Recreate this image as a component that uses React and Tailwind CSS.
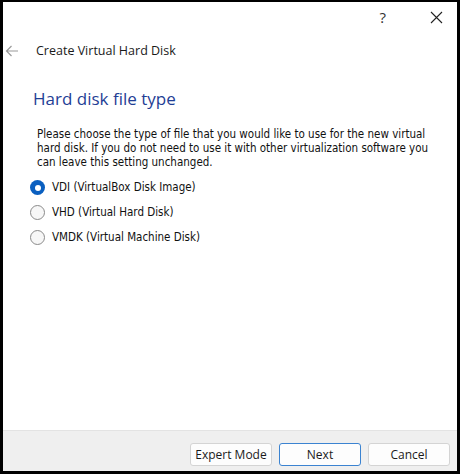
import React from "react";

const ui = { fontFamily: '"Open Sans", "Noto Sans", sans-serif' };
const body = { fontFamily: '"DejaVu Sans Condensed", "DejaVu Sans", Verdana, sans-serif' };

function Radio({ checked }) {
  return checked ? (
    <span className="flex h-[15px] w-[15px] items-center justify-center rounded-full bg-[#0a5fc0]">
      <span className="h-[6px] w-[6px] rounded-full bg-white" />
    </span>
  ) : (
    <span className="h-[15px] w-[15px] rounded-full border border-[#8a8a8a] bg-[#f7f7f7]" />
  );
}

function Btn({ children, primary }) {
  return (
    <button
      className={
        primary
          ? "h-[23px] w-[82px] rounded-[3px] border border-[#3b83d1] bg-[#fdfdfd] text-[12px] text-[#1a1a1a]"
          : "h-[23px] w-[82px] rounded-[3px] border border-[#d4d4d4] bg-[#fdfdfd] text-[12px] text-[#1a1a1a]"
      }
      style={ui}
    >
      {children}
    </button>
  );
}

export default function App() {
  const options = [
    "VDI (VirtualBox Disk Image)",
    "VHD (Virtual Hard Disk)",
    "VMDK (Virtual Machine Disk)",
  ];
  return (
    <div className="h-[474px] w-[460px] bg-black pb-[3px] pl-[3px] pr-[3px] pt-[2px]">
      <div className="flex h-full flex-col bg-white">
        {/* title bar */}
        <div className="flex h-[30px] items-center justify-end">
          <span className="mr-[44px] text-[15px] text-[#333]" style={ui}>?</span>
          <svg width="13" height="13" viewBox="0 0 13 13" className="mr-[14px]">
            <path d="M1 1L12 12M12 1L1 12" stroke="#222" strokeWidth="1.1" />
          </svg>
        </div>
        {/* header */}
        <div className="flex h-[38px] items-center">
          <svg width="14" height="12" viewBox="0 0 14 12" className="ml-[2px]">
            <path d="M13 6H1.5M6.5 1L1.5 6l5 5" stroke="#9a9a9a" strokeWidth="1.2" fill="none" />
          </svg>
          <span className="ml-[17px] text-[12.5px] text-[#1a1a1a]" style={ui}>Create Virtual Hard Disk</span>
        </div>
        {/* content */}
        <div className="flex flex-1 flex-col pl-[30px]">
          <h1 className="mt-[17px] text-[17px] leading-[24px] text-[#1f3e95]" style={ui}>Hard disk file type</h1>
          <p className="mt-[16px] pl-[4px] pr-[8px] text-[11.5px] leading-[14px] text-[#111]" style={body}>
            Please choose the type of file that you would like to use for the new virtual hard disk. If you do not
            need to use it with other virtualization software you can leave this setting unchanged.
          </p>
          <div className="ml-[-3px] mt-[11px] flex flex-col gap-[10px]">
            {options.map((o, i) => (
              <label key={o} className="flex h-[15px] items-center gap-[7px]">
                <Radio checked={i === 0} />
                <span className="text-[11.5px] text-[#111]" style={body}>{o}</span>
              </label>
            ))}
          </div>
        </div>
        {/* footer */}
        <div className="flex h-[41px] items-start justify-end gap-[7px] border-t border-[#e3e3e3] bg-[#efefef] pr-[7px] pt-[12px]">
          <Btn>Expert Mode</Btn>
          <Btn primary>Next</Btn>
          <Btn>Cancel</Btn>
        </div>
      </div>
    </div>
  );
}
